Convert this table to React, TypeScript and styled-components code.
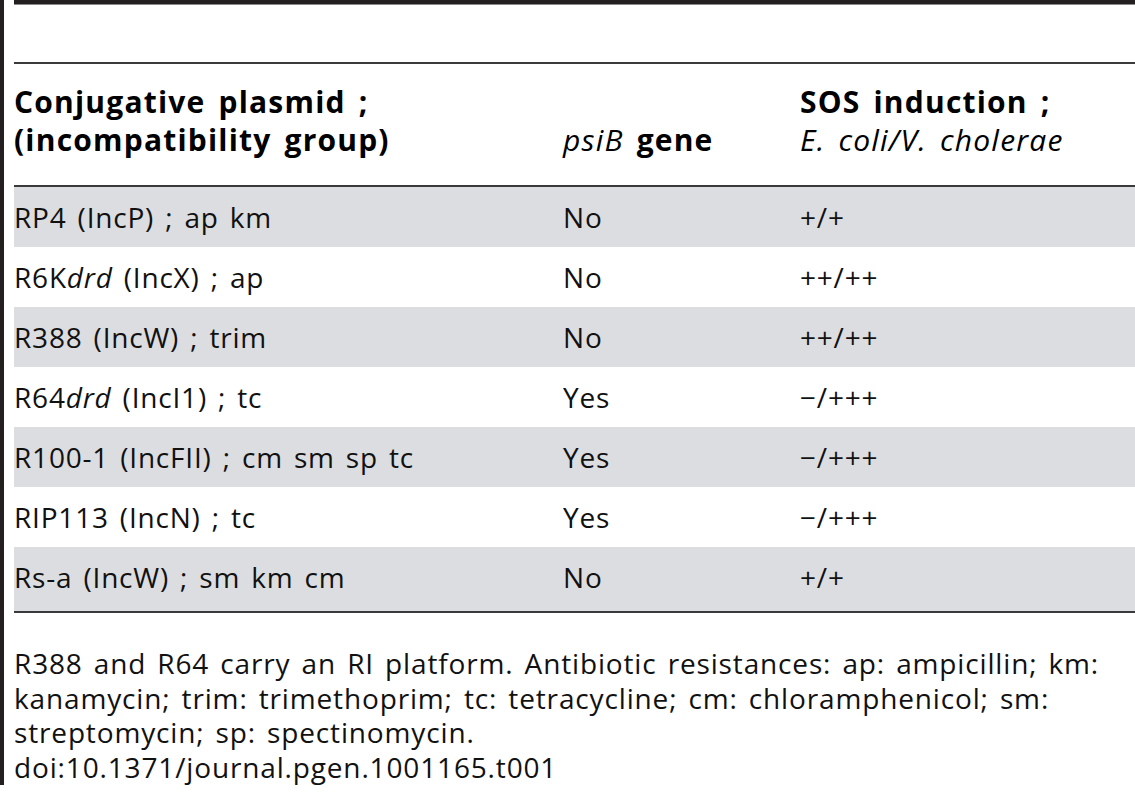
import React from "react";
import styled, { createGlobalStyle } from "styled-components";

const Global = createGlobalStyle`
  html, body { margin: 0; padding: 0; background: #fff; }
  body { font-family: "Open Sans", "Noto Sans", "Liberation Sans", sans-serif; color: #111; }
`;

const Frame = styled.div`
  width: 1135px;
  height: 785px;
  box-sizing: border-box;
  border-left: 4px solid #231f20;
  padding-left: 10px;
  display: flex;
  flex-direction: column;
`;

const TopRule = styled.div`
  height: 4px;
  background: #231f20;
  border-bottom: 1px solid #8a8a8a;
  margin-bottom: 57px;
`;

const Table = styled.div`
  display: grid;
  grid-template-columns: 549px 237px 1fr;
  border-top: 2px solid #3a3a3a;
  border-bottom: 2px solid #3a3a3a;
`;

const HeadCell = styled.div`
  font-size: 30px;
  font-weight: 700;
  line-height: 38px;
  letter-spacing: 1.2px;
  word-spacing: 4px;
  padding: 19px 0 26px;
  border-bottom: 2px solid #3a3a3a;
  color: #000;
  display: flex;
  flex-direction: column;
  justify-content: flex-end;
  white-space: nowrap;
`;

const Cell = styled.div<{ $shade: boolean; $last?: boolean }>`
  font-size: 28px;
  line-height: 36px;
  letter-spacing: 0.8px;
  word-spacing: 3px;
  padding: 12px 0 ${(p) => (p.$last ? "16px" : "12px")};
  background: ${(p) => (p.$shade ? "#dcdde0" : "#fff")};
  color: #111;
  white-space: nowrap;
`;

const It = styled.i<{ $w?: number }>`
  font-style: italic;
  font-weight: ${(p) => p.$w ?? 400};
`;

const Footer = styled.div`
  font-size: 28px;
  line-height: 34.7px;
  letter-spacing: 0.85px;
  word-spacing: 3px;
  margin-top: 33px;
  color: #111;
  white-space: nowrap;
`;

type Row = { name: React.ReactNode; psi: string; sos: string };

const rows: Row[] = [
  { name: "RP4 (IncP) ; ap km", psi: "No", sos: "+/+" },
  { name: <>R6K<It>drd</It> (IncX) ; ap</>, psi: "No", sos: "++/++" },
  { name: "R388 (IncW) ; trim", psi: "No", sos: "++/++" },
  { name: <>R64<It>drd</It> (IncI1) ; tc</>, psi: "Yes", sos: "\u2212/+++" },
  { name: "R100-1 (IncFII) ; cm sm sp tc", psi: "Yes", sos: "\u2212/+++" },
  { name: "RIP113 (IncN) ; tc", psi: "Yes", sos: "\u2212/+++" },
  { name: "Rs-a (IncW) ; sm km cm", psi: "No", sos: "+/+" },
];

export default function App() {
  return (
    <>
      <Global />
      <Frame>
        <TopRule />
        <Table>
          <HeadCell>
            <span>Conjugative plasmid ;</span>
            <span>(incompatibility group)</span>
          </HeadCell>
          <HeadCell>
            <span>
              <It>psiB</It> gene
            </span>
          </HeadCell>
          <HeadCell>
            <span>SOS induction ;</span>
            <span>
              <It>E. coli/V. cholerae</It>
            </span>
          </HeadCell>
          {rows.map((r, i) => {
            const shade = i % 2 === 0;
            const last = i === rows.length - 1;
            return (
              <React.Fragment key={i}>
                <Cell $shade={shade} $last={last}>{r.name}</Cell>
                <Cell $shade={shade} $last={last}>{r.psi}</Cell>
                <Cell $shade={shade} $last={last}>{r.sos}</Cell>
              </React.Fragment>
            );
          })}
        </Table>
        <Footer>
          R388 and R64 carry an RI platform. Antibiotic resistances: ap: ampicillin; km:
          <br />
          kanamycin; trim: trimethoprim; tc: tetracycline; cm: chloramphenicol; sm:
          <br />
          streptomycin; sp: spectinomycin.
          <br />
          doi:10.1371/journal.pgen.1001165.t001
        </Footer>
      </Frame>
    </>
  );
}
